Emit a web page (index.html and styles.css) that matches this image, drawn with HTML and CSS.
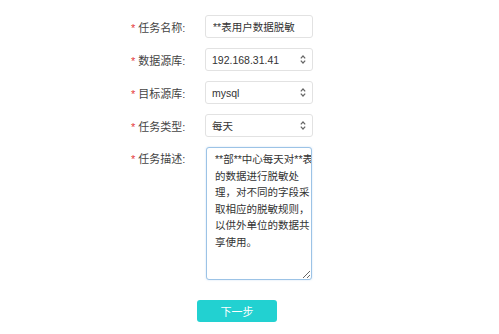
FILE: index.html
```html
<!DOCTYPE html>
<html lang="zh-CN">
<head>
    <meta charset="UTF-8">
    <meta name="viewport" content="width=device-width, initial-scale=1.0">
    <title>新建脱敏任务</title>
    <link rel="stylesheet" href="styles.css">
</head>
<body>
    <form class="task-form">
        <div class="form-row">
            <label class="form-label"><span class="required">*</span>任务名称:</label>
            <input class="form-control" type="text" value="**表用户数据脱敏">
        </div>
        <div class="form-row">
            <label class="form-label"><span class="required">*</span>数据源库:</label>
            <div class="select-wrap">
                <select class="form-control">
                    <option>192.168.31.41</option>
                </select>
                <svg class="select-arrow" width="6" height="9" viewBox="0 0 6 9">
                    <path d="M0.8 3.4 L3 1 L5.2 3.4 M0.8 5.6 L3 8 L5.2 5.6" fill="none" stroke="#666" stroke-width="1.2"/>
                </svg>
            </div>
        </div>
        <div class="form-row">
            <label class="form-label"><span class="required">*</span>目标源库:</label>
            <div class="select-wrap">
                <select class="form-control">
                    <option>mysql</option>
                </select>
                <svg class="select-arrow" width="6" height="9" viewBox="0 0 6 9">
                    <path d="M0.8 3.4 L3 1 L5.2 3.4 M0.8 5.6 L3 8 L5.2 5.6" fill="none" stroke="#666" stroke-width="1.2"/>
                </svg>
            </div>
        </div>
        <div class="form-row">
            <label class="form-label"><span class="required">*</span>任务类型:</label>
            <div class="select-wrap">
                <select class="form-control">
                    <option>每天</option>
                </select>
                <svg class="select-arrow" width="6" height="9" viewBox="0 0 6 9">
                    <path d="M0.8 3.4 L3 1 L5.2 3.4 M0.8 5.6 L3 8 L5.2 5.6" fill="none" stroke="#666" stroke-width="1.2"/>
                </svg>
            </div>
        </div>
        <div class="form-row form-row-top">
            <label class="form-label label-top"><span class="required">*</span>任务描述:</label>
            <textarea class="form-control form-textarea">**部**中心每天对**表
的数据进行脱敏处
理，对不同的字段采
取相应的脱敏规则，
以供外单位的数据共
享使用。</textarea>
        </div>
        <div class="form-actions">
            <button type="button" class="btn-next">下一步</button>
        </div>
    </form>
</body>
</html>
```

FILE: styles.css
```css
body {
    margin: 0;
    background-color: #ffffff;
    font-family: "Liberation Sans", "Noto Sans CJK SC", sans-serif;
    font-size: 11px;
    color: #333;
}
.task-form {
    display: flex;
    flex-direction: column;
    gap: 10px;
    padding: 15px 0 0 131px;
}
.form-row {
    display: flex;
    align-items: center;
}
.form-row-top {
    align-items: flex-start;
}
.form-label {
    width: 74px;
    color: #444;
    font-size: 11px;
}
.label-top {
    padding-top: 3px;
}
.required {
    color: #e4393c;
    margin-right: 3px;
}
.form-control {
    box-sizing: border-box;
    width: 108px;
    height: 23px;
    margin: 0;
    padding: 0 7px;
    border: 1px solid #e2e2e2;
    border-radius: 3px;
    background-color: #fff;
    font-family: "Liberation Sans", "Noto Sans CJK SC", sans-serif;
    font-size: 10.5px;
    color: #333;
    outline: none;
}
.select-wrap {
    position: relative;
    width: 108px;
}
select.form-control {
    appearance: none;
    -webkit-appearance: none;
    padding-left: 6px;
}
.select-arrow {
    position: absolute;
    right: 7px;
    top: 7px;
    pointer-events: none;
}
.form-textarea {
    width: 106px;
    height: 133px;
    margin-left: 1px;
    padding: 3px 0 3px 8px;
    line-height: 16.6px;
    border-color: #9cc3e6;
    box-shadow: 0 0 2px rgba(100, 160, 220, 0.35);
    overflow: hidden;
    white-space: pre;
    resize: both;
}
.form-actions {
    padding: 10px 0 0 66px;
}
.btn-next {
    width: 80px;
    height: 22px;
    border: none;
    border-radius: 3px;
    background-color: #22d1d1;
    color: #fff;
    font-family: "Liberation Sans", "Noto Sans CJK SC", sans-serif;
    font-size: 11px;
    cursor: pointer;
}
```
